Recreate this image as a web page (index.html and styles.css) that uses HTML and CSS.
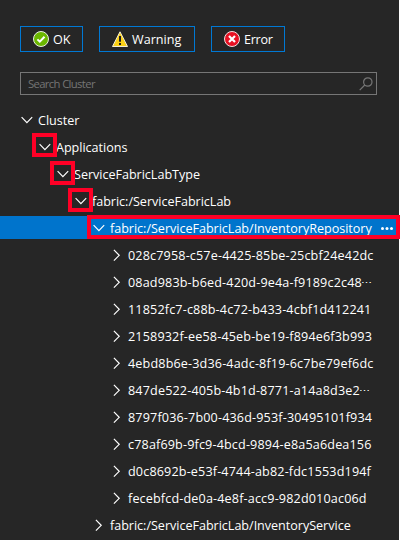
FILE: index.html
```
<!DOCTYPE html>
<html lang="en">
<head>
<meta charset="utf-8">
<title>Cluster</title>
<link rel="stylesheet" href="styles.css">
</head>
<body>
<svg class="defs" aria-hidden="true">
  <symbol id="down" viewBox="0 0 14 14"><path d="M1.6 3.2 6.9 8.7l5.3-5.5" fill="none" stroke="currentColor" stroke-width="1.2"/></symbol>
  <symbol id="right" viewBox="0 0 14 14"><path d="M3.9.9 9.2 6.3 3.9 11.7" fill="none" stroke="currentColor" stroke-width="1.2"/></symbol>
</svg>
<main class="explorer">
  <div class="filters">
    <button class="filter ok"><svg viewBox="0 0 16 16"><circle cx="8" cy="8" r="7.5" fill="#6bb700" stroke="#e8eee0"/><path d="m4.4 8.4 2.4 2.3 4.7-5" fill="none" stroke="#fff" stroke-width="2"/></svg><span>OK</span></button>
    <button class="filter warning"><svg viewBox="0 0 16 16"><path d="M8 .8 15.5 15.5H.5z" fill="#fcd116" stroke="#f4eed8" stroke-linejoin="round"/><path d="M8 5v5.8M8 12v2" stroke="#1e1e1e" stroke-width="2"/></svg><span>Warning</span></button>
    <button class="filter error"><svg viewBox="0 0 16 16"><circle cx="8" cy="8" r="7.5" fill="#e81123" stroke="#f2dfe0"/><path d="m5 5 6 6M11 5l-6 6" stroke="#fff" stroke-width="2.2"/></svg><span>Error</span></button>
  </div>
  <div class="search"><span>Search Cluster</span><svg viewBox="0 0 14 14"><circle cx="8.8" cy="5" r="4.2"/><path d="M5.8 8 .7 13.2"/></svg></div>
  <div class="tree">
    <div class="row l0"><svg><use href="#down"/></svg><span>Cluster</span></div>
    <div class="row l1 marked"><svg><use href="#down"/></svg><span>Applications</span></div>
    <div class="row l2 marked"><svg><use href="#down"/></svg><span>ServiceFabricLabType</span></div>
    <div class="row l3 marked"><svg><use href="#down"/></svg><span>fabric:/ServiceFabricLab</span></div>
    <div class="row l4 selected"><svg><use href="#down"/></svg><span>fabric:/ServiceFabricLab/InventoryRepository</span><i class="more"></i></div>
    <div class="row l5"><svg><use href="#right"/></svg><span>028c7958-c57e-4425-85be-25cbf24e42dc</span></div>
    <div class="row l5"><svg><use href="#right"/></svg><span>08ad983b-b6ed-420d-9e4a-f9189c2c48<b>⋯</b></span></div>
    <div class="row l5"><svg><use href="#right"/></svg><span>11852fc7-c88b-4c72-b433-4cbf1d412241</span></div>
    <div class="row l5"><svg><use href="#right"/></svg><span>2158932f-ee58-45eb-be19-f894e6f3b993</span></div>
    <div class="row l5"><svg><use href="#right"/></svg><span>4ebd8b6e-3d36-4adc-8f19-6c7be79ef6dc</span></div>
    <div class="row l5"><svg><use href="#right"/></svg><span>847de522-405b-4b1d-8771-a14a8d3e2<b>⋯</b></span></div>
    <div class="row l5"><svg><use href="#right"/></svg><span>8797f036-7b00-436d-953f-30495101f934</span></div>
    <div class="row l5"><svg><use href="#right"/></svg><span>c78af69b-9fc9-4bcd-9894-e8a5a6dea156</span></div>
    <div class="row l5"><svg><use href="#right"/></svg><span>d0c8692b-e53f-4744-ab82-fdc1553d194f</span></div>
    <div class="row l5"><svg><use href="#right"/></svg><span>fecebfcd-de0a-4e8f-acc9-982d010ac06d</span></div>
    <div class="row l4"><svg><use href="#right"/></svg><span>fabric:/ServiceFabricLab/InventoryService</span></div>
  </div>
</main>
</body>
</html>
```
FILE: styles.css
```
*, *::before, *::after { box-sizing: border-box; }
body { margin: 0; background: #fff; font: 12.6px/27px "Open Sans", "Noto Sans", sans-serif; color: #fff; overflow: hidden; }
.defs { position: absolute; width: 0; height: 0; }
.explorer { width: 399px; height: 540px; padding-top: 26px; background: #262626; }
.filters { display: flex; gap: 16px; padding-left: 20px; }
.filter { display: flex; align-items: center; height: 26px; padding: 0 0 0 12px; border: 1px solid #0078d4; background: transparent; color: #fff; font: inherit; }
.filter svg { width: 16px; height: 16px; margin-right: 4px; flex: none; }
.ok { width: 63px; }
.warning { width: 96px; }
.error { width: 74px; letter-spacing: -.3px; }
.search { display: flex; align-items: center; justify-content: space-between; width: 357px; height: 23px; margin: 20px 0 0 20px; padding: 0 3px 0 7px; border: 1px solid #767676; color: #757575; font-size: 11.3px; letter-spacing: -.65px; }
.search svg { width: 14px; height: 14px; fill: none; stroke: #767676; stroke-width: 1.2; }
.tree { padding-top: 12px; }
.row { display: flex; align-items: center; position: relative; height: 27px; white-space: nowrap; letter-spacing: -.03px; }
.row svg { width: 14px; height: 14px; margin-right: 4px; flex: none; }
.l0 { padding-left: 20px; }
.l1 { padding-left: 38px; }
.l2 { padding-left: 56px; }
.l3 { padding-left: 74px; }
.l4 { padding-left: 92px; }
.l5 { padding-left: 110px; letter-spacing: .15px; }
.l5 b { font-weight: 400; font-size: 11px; margin-left: -1px; }
.marked::before, .selected::after { content: ""; position: absolute; border: 4px solid #ff0026; }
.marked::before { width: 25px; height: 24px; top: 0; }
.marked.l1::before { left: 32px; top: -1px; }
.l2::before { left: 50px; }
.l3::before { left: 68px; }
.selected { background: linear-gradient(#0074cc, #0074cc) 0 1px / 397px 23px no-repeat; }
.selected::after { left: 87px; top: 0; width: 313px; height: 24px; }
.more { position: absolute; left: 381px; top: 12px; width: 3px; height: 3px; border-radius: 50%; background: #fff; box-shadow: 4.5px 0 #fff, 9px 0 #fff; }
```
